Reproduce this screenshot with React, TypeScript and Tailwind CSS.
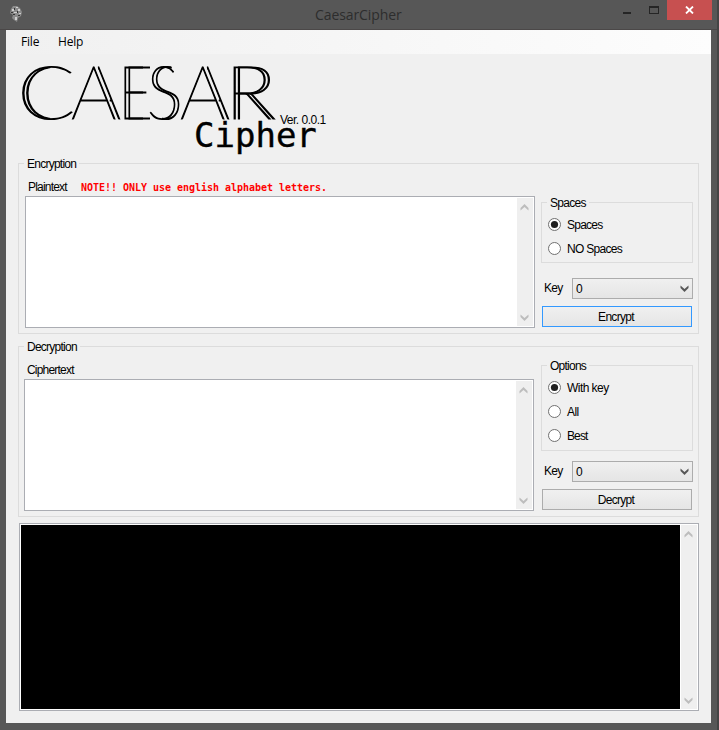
import type { ReactNode } from "react";

const label = "whitespace-nowrap text-[12px] leading-[16px]";

function Chevron({ up = false, dark = false }: { up?: boolean; dark?: boolean }) {
  return (
    <svg width="9" height="7" viewBox="0 0 9 7" className={up ? "rotate-180" : ""}>
      <path d="M0.5 0.5 L4.5 4 L8.5 0.5 V3 L4.5 7 L0.5 3 Z" fill={dark ? "#565656" : "#bdbdbd"} />
    </svg>
  );
}

function ScrollBar() {
  return (
    <div className="flex w-4 shrink-0 flex-col items-center justify-between bg-[#efefef] pt-[6px] pr-[2px] pb-[5px]">
      <Chevron up />
      <Chevron />
    </div>
  );
}

function Group({ title, titleClass, className, children }: { title: string; titleClass: string; className: string; children: ReactNode }) {
  return (
    <section className={`relative border border-[#dcdcdc] ${className}`}>
      <h2 className={`absolute -top-2 left-[5px] bg-[#f0f0f0] pr-[3px] pl-[3px] ${label} ${titleClass}`}>{title}</h2>
      {children}
    </section>
  );
}

function Radio({ text, checked = false, className = "" }: { text: string; checked?: boolean; className?: string }) {
  return (
    <div className="flex h-6 items-center">
      <svg width="13" height="13" viewBox="0 0 13 13" className="mb-[2px]">
        <circle cx="6.5" cy="6.5" r="6" fill="#fff" stroke="#707070" />
        {checked && <circle cx="6.5" cy="6.5" r="3.6" fill="#202020" />}
      </svg>
      <span className={`ml-[6px] ${label} ${className}`}>{text}</span>
    </div>
  );
}

function KeyRow({ className }: { className: string }) {
  return (
    <div className={`flex h-[21px] items-center ${className}`}>
      <span className={`ml-[3px] w-7 ${label} -mt-[1px] tracking-[-0.7px]`}>Key</span>
      <div className="flex h-[21px] w-[121px] items-center justify-between border border-[#acacac] bg-linear-to-b from-[#f0f0f0] to-[#e5e5e5] pr-[3px] pl-[3px]">
        <span className={label}>0</span>
        <Chevron dark />
      </div>
    </div>
  );
}

function Button({ text, focused = false }: { text: string; focused?: boolean }) {
  return (
    <button
      className={`ml-px block h-[21px] w-[150px] border bg-linear-to-b from-[#f0f0f0] to-[#e5e5e5] pr-[2px] tracking-[-0.7px] ${label} ${focused ? "border-[#3399ff]" : "border-[#acacac]"}`}
    >
      {text}
    </button>
  );
}

const inlineGlyph =
  "relative block h-[60px] w-fit origin-left whitespace-pre [-webkit-text-stroke:1.2px_#000] after:absolute after:top-0 after:content-[attr(data-letter)]";

const letters = [
  { c: "C", box: "w-[51px]", cls: "-ml-[3px] scale-x-[1.14] after:left-[3.5px] after:[clip-path:inset(0_50%_0_0)]" },
  { c: "A", box: "w-[48px]", cls: "scale-x-[0.95] after:left-[5px] after:[clip-path:polygon(46%_0,100%_0,100%_100%,75%_100%,75%_64%,60%_64%)]" },
  { c: "E", box: "w-[29px]", cls: "-ml-px scale-x-[0.8] after:left-[5px] after:[clip-path:inset(0_40%_0_0)]" },
  { c: "S", box: "w-[32px]", cls: "-ml-px scale-x-[0.8] after:left-[5px] after:[clip-path:polygon(0_0,65%_0,65%_45%,100%_45%,100%_100%,35%_100%,35%_60%,0_60%)]" },
  { c: "A", box: "w-[48px]", cls: "scale-x-[0.95] after:left-[5px] after:[clip-path:polygon(46%_0,100%_0,100%_100%,75%_100%,75%_64%,60%_64%)]" },
  { c: "R", box: "w-[50px]", cls: "-ml-[3px] scale-x-[1.06] after:left-[4px]" },
];

export default function App() {
  return (
    <div className="flex h-[730px] w-[719px] flex-col overflow-hidden border-r-2 border-[#444] bg-[#575757] font-['Liberation_Sans',sans-serif] text-black">
      <header className="flex h-[30px] shrink-0 items-start border-b border-[#4b4848]">
        <svg className="mt-[5px] ml-[9px]" width="14" height="18" viewBox="0 0 14 18">
          <path d="M2 4 4 1 8 1 11 3 13 7 12 11 9 13 8 17 5 15 3 13 4 10 1 8Z" fill="#8b8b8b" />
          <path d="M3 4h2v2H3zM7 2h2v1H7zM9 4h2v2H9zM5 7h3v1H5zM10 8h2v1h-2zM6 12h2v3H6z" fill="#cfcfcf" />
          <path d="M5 3h1v2H5zM2 7h2v1H2zM8 6h1v2H8zM4 9h2v1H4zM9 10h2v1H9z" fill="#353535" />
        </svg>
        <h1 className="mt-[5px] ml-[292px] w-[87px] font-['Open_Sans',sans-serif] text-[14px] leading-5 tracking-[-0.1px] whitespace-nowrap text-[#2d2d2d]">CaesarCipher</h1>
        <div className="mt-3 ml-[221px] h-[2px] w-2 bg-[#252525]" />
        <div className="mt-[6px] ml-[18px] h-2 w-[10px] border border-t-2 border-[#252525]" />
        <div className="ml-2 flex h-5 w-[45px] items-center justify-center bg-[#c75050]">
          <svg width="9" height="8" viewBox="0 0 9 8"><path d="M1 0.5 8 7.5M8 0.5 1 7.5" stroke="#fff" strokeWidth="1.8" /></svg>
        </div>
      </header>

      <main className="ml-[6px] h-[693px] w-[705px] shrink-0 bg-[#f0f0f0]">
        <nav className="flex h-6 items-center bg-linear-to-r from-[#f0f0f0] to-[#fdfdfd] font-['Open_Sans',sans-serif] text-[12px]">
          <span className="ml-[15px] w-[37px] tracking-[-0.2px]">File</span>
          <span className="tracking-[-0.2px]">Help</span>
        </nav>

        <div className="flex h-[109px] pt-[6px] pl-[14px]">
          <div className="flex h-[60px] w-[258px] font-['Lato',sans-serif] text-[75px] leading-[60px] font-thin">
            {letters.map((l, i) => (
              <div key={i} className={`${l.box} shrink-0`}>
                <span data-letter={l.c} className={`${inlineGlyph} ${l.cls}`}>{l.c}</span>
              </div>
            ))}
          </div>
          <div className="pt-[52px]">
            <div className={`${label} ml-[2px] tracking-[-0.5px]`}>Ver. 0.0.1</div>
            <div className="-mt-[13px] -ml-[84px] font-['DejaVu_Sans_Mono',monospace] text-[34px] leading-[40px] [-webkit-text-stroke:0.4px_#000]">Cipher</div>
          </div>
        </div>

        <Group title="Encryption" titleClass="tracking-[-0.75px]" className="ml-3 flex h-[171px] w-[681px]">
          <div className="ml-[6px] w-[510px]">
            <div className="flex h-8 items-end pb-[1px]">
              <span className={`ml-[3px] w-[53px] ${label} tracking-[-0.8px]`}>Plaintext</span>
              <span className="-mb-px font-['DejaVu_Sans_Mono',monospace] text-[10px] leading-4 font-bold tracking-[-0.02px] whitespace-nowrap text-[#ff0000]">NOTE!! ONLY use english alphabet letters.</span>
            </div>
            <div className="flex h-[132px] justify-end border border-[#abadb3] bg-white p-px"><ScrollBar /></div>
          </div>
          <div className="ml-[6px] w-[152px] pt-[38px]">
            <Group title="Spaces" titleClass="tracking-[-0.7px]" className="h-[61px] pt-[10px] pl-[6px]">
              <Radio text="Spaces" checked className="tracking-[-0.75px]" />
              <Radio text="NO Spaces" className="tracking-[-0.7px]" />
            </Group>
            <KeyRow className="mt-[15px] mb-[7px]" />
            <Button text="Encrypt" focused />
          </div>
        </Group>

        <Group title="Decryption" titleClass="tracking-[-0.75px]" className="mt-3 ml-3 flex h-[171px] w-[681px]">
          <div className="ml-[5px] w-[510px]">
            <div className="flex h-8 items-end pb-[1px]">
              <span className={`ml-[3px] ${label} tracking-[-0.8px]`}>Ciphertext</span>
            </div>
            <div className="flex h-[132px] justify-end border border-[#abadb3] bg-white p-px"><ScrollBar /></div>
          </div>
          <div className="ml-[7px] w-[152px] pt-[18px]">
            <Group title="Options" titleClass="tracking-[-0.75px]" className="h-[86px] pt-[10px] pl-[6px]">
              <Radio text="With key" checked className="tracking-[-0.55px]" />
              <Radio text="All" className="tracking-[-0.6px]" />
              <Radio text="Best" className="tracking-[-0.9px]" />
            </Group>
            <KeyRow className="mt-[10px] mb-[7px]" />
            <Button text="Decrypt" />
          </div>
        </Group>

        <div className="mt-[6px] ml-[13px] flex h-[188px] w-[680px] border border-[#abadb3] bg-white p-px">
          <div className="mr-px flex-1 bg-black" />
          <ScrollBar />
        </div>
      </main>
    </div>
  );
}
